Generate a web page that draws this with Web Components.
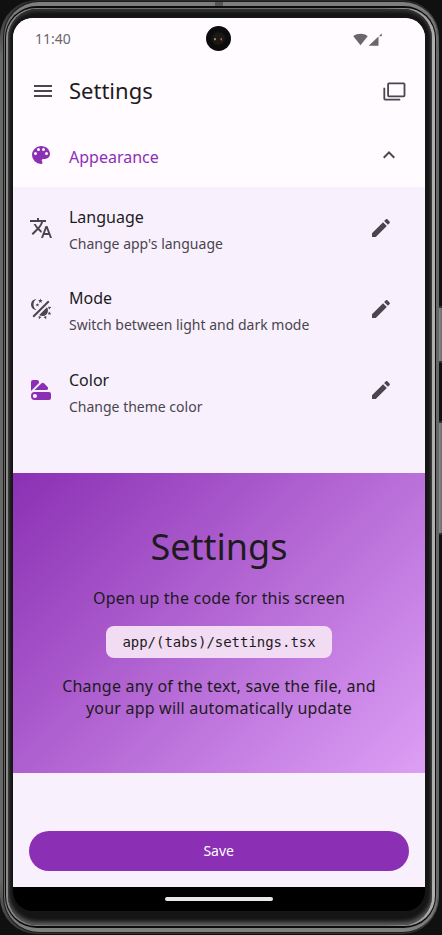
<!DOCTYPE html>
<html lang="en">
<head>
<meta charset="utf-8">
<title>Settings</title>
<style>
html,body{margin:0;height:100%;background:#101010;overflow:hidden}
body{font-family:"Noto Sans",sans-serif;color:#1d1b1e}
</style>
</head>
<body>
<phone-frame>
  <status-bar time="11:40"></status-bar>
  <app-header>Settings</app-header>
  <section-header>Appearance</section-header>
  <setting-row icon="translate"><span slot="title">Language</span><span slot="description">Change app's language</span></setting-row>
  <setting-row icon="mode"><span slot="title">Mode</span><span slot="description">Switch between light and dark mode</span></setting-row>
  <setting-row icon="swatch"><span slot="title">Color</span><span slot="description">Change theme color</span></setting-row>
  <screen-info>
    <span slot="title">Settings</span>
    <span slot="lead">Open up the code for this screen</span>
    <span slot="code">app/(tabs)/settings.tsx</span>
    <span slot="note">Change any of the text, save the file, and<br>your app will automatically update</span>
  </screen-info>
  <save-button>Save</save-button>
</phone-frame>
<script>
const define = (name, render) => customElements.define(name, class extends HTMLElement {
  connectedCallback() {
    if (!this.shadowRoot) this.attachShadow({mode: 'open'}).innerHTML = render(this);
  }
});

const icons = {
  menu: '<path d="M3,6H21V8H3V6M3,11H21V13H3V11M3,16H21V18H3V16Z"/>',
  windows: '<g fill="none" stroke="currentColor" stroke-width="1.8"><rect x="6.1" y="4.3" width="16.4" height="13" rx=".8"/><path d="M2.3 8.8V19.8q0 .9.9.9H18.2"/></g>',
  palette: '<path d="M17.5,12A1.5,1.5 0 0,1 16,10.5A1.5,1.5 0 0,1 17.5,9A1.5,1.5 0 0,1 19,10.5A1.5,1.5 0 0,1 17.5,12M14.5,8A1.5,1.5 0 0,1 13,6.5A1.5,1.5 0 0,1 14.5,5A1.5,1.5 0 0,1 16,6.5A1.5,1.5 0 0,1 14.5,8M9.5,8A1.5,1.5 0 0,1 8,6.5A1.5,1.5 0 0,1 9.5,5A1.5,1.5 0 0,1 11,6.5A1.5,1.5 0 0,1 9.5,8M6.5,12A1.5,1.5 0 0,1 5,10.5A1.5,1.5 0 0,1 6.5,9A1.5,1.5 0 0,1 8,10.5A1.5,1.5 0 0,1 6.5,12M12,3A9,9 0 0,0 3,12A9,9 0 0,0 12,21A1.5,1.5 0 0,0 13.5,19.5C13.5,19.11 13.35,18.76 13.11,18.5C12.88,18.23 12.73,17.88 12.73,17.5A1.5,1.5 0 0,1 14.23,16H16A5,5 0 0,0 21,11C21,6.58 16.97,3 12,3Z"/>',
  chevron: '<path d="M7.41,15.41L12,10.83L16.59,15.41L18,14L12,8L6,14L7.41,15.41Z"/>',
  pencil: '<path d="M20.71,7.04C21.1,6.65 21.1,6 20.71,5.63L18.37,3.29C18,2.9 17.35,2.9 16.96,3.29L15.12,5.12L18.87,8.87M3,17.25V21H6.75L17.81,9.93L14.06,6.18L3,17.25Z"/>',
  translate: '<path d="M12.87,15.07L10.33,12.56L10.36,12.53C12.1,10.59 13.34,8.36 14.07,6H17V4H10V2H8V4H1V6H12.17C11.5,7.92 10.44,9.75 9,11.35C8.07,10.32 7.3,9.19 6.69,8H4.69C5.42,9.63 6.42,11.17 7.67,12.56L2.58,17.58L4,19L9,14L12.11,17.11L12.87,15.07M18.5,10H16.5L12,22H14L15.12,19H19.87L21,22H23L18.5,10M15.88,17L17.5,12.67L19.12,17H15.88Z"/>',
  mode: '<path d="M7.5,2C5.71,3.15 4.5,5.18 4.5,7.5C4.5,9.82 5.71,11.85 7.53,13C4.46,13 2,10.54 2,7.5A5.5,5.5 0 0,1 7.5,2M19.07,3.5L20.5,4.93L4.93,20.5L3.5,19.07L19.07,3.5M12.89,5.93L11.41,5L9.97,6L10.39,4.3L9,3.24L10.75,3.12L11.33,1.47L12,3.1L13.73,3.13L12.38,4.26L12.89,5.93M9.59,9.54L8.43,8.81L7.31,9.59L7.65,8.27L6.56,7.44L7.92,7.35L8.37,6.06L8.88,7.33L10.24,7.36L9.19,8.23L9.59,9.54M19,13.5A5.5,5.5 0 0,1 13.5,19C12.28,19 11.15,18.6 10.24,17.93L17.93,10.24C18.6,11.15 19,12.28 19,13.5M14.6,20.08L17.37,18.93L17.13,22.28L14.6,20.08M18.93,17.38L20.08,14.61L22.28,17.15L18.93,17.38M20.08,12.42L18.94,9.64L22.28,9.88L20.08,12.42M9.63,18.93L12.4,20.08L9.87,22.27L9.63,18.93Z"/>',
  swatch: '<path fill-rule="evenodd" d="M4 2H8Q10 2 10 4V5L2 13V4Q2 2 4 2ZM5.5 12L12.6 5.3Q13.8 4.2 15 5.3L18.6 8.9Q19.4 9.8 19 11Q18.6 12 17.5 12ZM5.5 14H20Q22 14 22 16V20Q22 22 20 22H5.5Q2 22 2 18T5.5 14ZM5.9 15.9A2.1 2.1 0 1 0 5.9 20.1A2.1 2.1 0 1 0 5.9 15.9Z"/>',
  wifi: '<path d="M12 21L.5 6.6C3.8 4 7.8 2.7 12 2.7S20.2 4 23.5 6.6Z"/>',
  signal: '<path d="M1 22L16.8 7.2V22ZM18.2 5.8L22 2V6.8H18.2Z"/>'
};
define('ui-icon', el => `
  <style>:host{display:block;flex:none;width:24px;height:24px}svg{display:block;width:100%;height:100%;fill:currentColor}</style>
  <svg viewBox="0 0 24 24">${icons[el.getAttribute('name')]}</svg>`);

define('phone-frame', () => `
  <style>
    :host{display:block;position:relative;width:442px;height:935px;overflow:hidden;background:#101010}
    .key{position:absolute;left:437px;width:5px;box-sizing:border-box;background:linear-gradient(90deg,#555,#858585 50%,#6a6a6a);border-radius:1px;border-block:2px solid #333}
    .body{position:absolute;inset:0 3px 1px 0;border-radius:37px;background:linear-gradient(#2c2c2c,#686866 6%,#686866 94%,#333)}
    .body div{position:absolute}
    .r0{inset:1px 1px 1px 3px;border-radius:36px;background:#1c1c1c}
    .r1{inset:2px 1px 2px 4px;border-radius:35px;background:linear-gradient(#80807e,#666664 5%,#666664 95%,#80807e)}
    .r2{inset:6px 3px 6px 5px;border-radius:32px;background:#0c0c0c}
    .r3{inset:8px 4px 8px 6px;border-radius:30px;background:linear-gradient(90deg,#8b8b8b,#6c6c6c 12%,#6c6c6c 88%,#b0b0b0)}
    .r4{inset:9px 7px 9px 8px;border-radius:29px;background:#151515;box-shadow:inset 0 -3px 4px #606060,inset 0 3px 3px #303030}
    .screen{position:absolute;left:13px;top:18px;width:412px;height:893px;border-radius:20px;overflow:hidden;background:#000;display:flex;flex-direction:column}
    .app{height:868.7px;flex:none;display:flex;flex-direction:column;background:#f8f1fd}
    .nav{flex:1;display:flex;justify-content:center}
    .nav i{width:108px;height:4px;border-radius:2px;background:#e8e8e8;margin-top:10px}
    .camera{position:absolute;left:206.3px;top:26px;width:25px;height:25px;border-radius:50%;background:radial-gradient(ellipse 1px 1.6px at 36% 53%,#998b55 60%,transparent),radial-gradient(ellipse 1px 1.6px at 61% 53%,#a06a44 60%,transparent),radial-gradient(circle,#1c1917 30%,#0c0c0c 42%)}
    .port{position:absolute;left:215px;top:2px;width:8px;height:4px;background:#555}
  </style>
  <div class="key" style="top:306px;height:57px"></div>
  <div class="key" style="top:421px;height:114px"></div>
  <div class="body"><div class="r0"></div><div class="r1"></div><div class="r2"></div><div class="r3"></div><div class="r4"></div></div>
  <div class="port"></div>
  <div class="screen"><div class="app"><slot></slot></div><div class="nav"><i></i></div></div>
  <div class="camera"></div>`);

define('status-bar', el => `
  <style>
    :host{display:flex;align-items:center;height:42px;padding:0 42px 0 22px;background:#fffbff;color:#69676b;font:14px/20px "Noto Sans",sans-serif}
    time{flex:1}
    .icons{display:flex}
    ui-icon{width:15px;height:15px}
  </style>
  <time>${el.getAttribute('time')}</time><div class="icons"><ui-icon name="wifi"></ui-icon><ui-icon name="signal"></ui-icon></div>`);

define('app-header', () => `
  <style>
    :host{display:flex;align-items:center;height:62px;padding:0 18.6px 0 17.6px;background:#fffbff;color:#4a454e}
    h1{flex:1;margin:0 0 2px 14.4px;font:400 22px/28px "Noto Sans",sans-serif;color:#1d1b1e}
  </style>
  <ui-icon name="menu"></ui-icon><h1><slot></slot></h1><ui-icon name="windows"></ui-icon>`);

define('section-header', () => `
  <style>
    :host{display:flex;align-items:center;box-sizing:border-box;height:65.2px;padding:5px 24.4px 0 15.7px;background:#fffbff;color:#8b30b4}
    span{flex:1;margin-left:16.3px;font:16px/24px "Noto Sans",sans-serif}
    ui-icon{margin-bottom:4px}
    [name=chevron]{color:#4a454e}
  </style>
  <ui-icon name="palette"></ui-icon><span><slot></slot></span><ui-icon name="chevron"></ui-icon>`);

define('setting-row', el => `
  <style>
    :host{display:flex;align-items:center;height:81.2px;padding:0 32.4px 0 15.7px;color:#4a454e}
    .text{flex:1;display:flex;flex-direction:column;margin:5.9px 0 0 16.3px}
    .title{font:16px/26px "Noto Sans",sans-serif;color:#1d1b1e}
    .description{font:14px/27px "Noto Sans",sans-serif}
    [name=swatch]{color:#8b30b4}
  </style>
  <ui-icon name="${el.getAttribute('icon')}"></ui-icon>
  <div class="text"><div class="title"><slot name="title"></slot></div><div class="description"><slot name="description"></slot></div></div>
  <ui-icon name="pencil"></ui-icon>`);

define('screen-info', () => `
  <style>
    :host{display:flex;flex-direction:column;align-items:center;box-sizing:border-box;height:300.4px;margin-top:42px;padding-top:51.8px;background:linear-gradient(135deg,#8b30b4,#dd9ff5);text-align:center;font:16px/22px "Noto Sans",sans-serif;letter-spacing:.2px}
    h2{margin:0 0 18px;font:400 36px/44px "Noto Sans",sans-serif;letter-spacing:0}
    p{margin:0}
    code{display:block;box-sizing:border-box;width:226px;height:32px;margin:17.2px 0 16.8px;border-radius:8px;background:#f2dcf3;font:14px/32px "DejaVu Sans Mono",monospace;letter-spacing:-.03px}
  </style>
  <h2><slot name="title"></slot></h2><p><slot name="lead"></slot></p><code><slot name="code"></slot></code><p><slot name="note"></slot></p>`);

define('save-button', () => `
  <style>
    :host{display:flex;margin:auto 16.3px 15.9px 15.7px}
    button{flex:1;height:40px;border:0;border-radius:20px;background:#8b30b4;color:#fff;font:14px/20px "Noto Sans",sans-serif;padding:0}
  </style>
  <button><slot></slot></button>`);
</script>
</body>
</html>
